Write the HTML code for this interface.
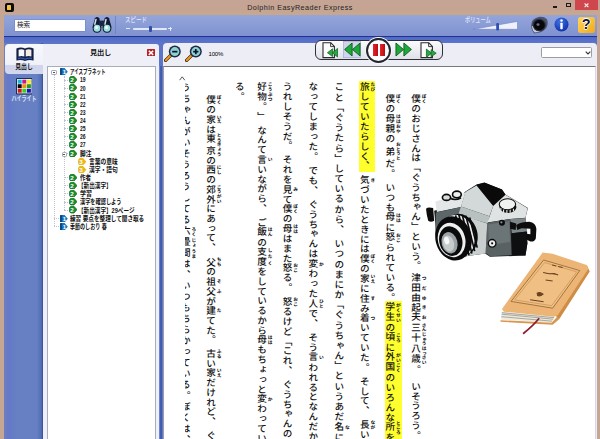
<!DOCTYPE html>
<html lang="ja"><head><meta charset="utf-8"><title>Dolphin EasyReader Express</title>
<style>
html,body{margin:0;padding:0}
body{width:600px;height:439px;overflow:hidden;position:relative;background:#c5a594;font-family:"Liberation Sans","IPAGothic",sans-serif;color:#111}
.a{position:absolute}
.ui{font-family:"Liberation Sans","Noto Sans CJK JP","IPAPGothic",sans-serif}
.col{position:absolute;top:93.5px;writing-mode:vertical-rl;white-space:nowrap;font-family:"Noto Sans CJK JP","IPAGothic",sans-serif;font-size:9.6px;line-height:22px;width:22px;letter-spacing:.12px;color:#101010;font-weight:500;text-spacing-trim:space-all;text-rendering:geometricPrecision}
.col rt{font-size:4.7px;letter-spacing:0;color:#000;line-height:5px;font-weight:700}
.hs{display:inline-block;height:4px;width:1px}
.row{position:absolute;left:0;height:8px;white-space:nowrap;font-size:7px;line-height:8px;font-weight:bold;color:#111}
.row span{display:inline-block;transform-origin:0 50%}
</style></head>
<body>
<div class="a" style="left:0;top:0;width:600px;height:15px;background:linear-gradient(#c5a495,#c5a494 60%,#c8a88c)"></div>
<div class="a" style="left:4.5px;top:3px;width:9px;height:8.5px;background:#0c0c10;border-radius:2px"></div>
<div class="a" style="left:7px;top:4.5px;width:4px;height:5.5px;background:#f3c53c;border-radius:.5px"></div>
<div class="a ui" style="left:200px;top:2.6px;width:200px;text-align:center;font-size:7.2px;line-height:9px;letter-spacing:.45px;color:#231f1c">Dolphin EasyReader Express</div>
<div class="a" style="left:552.5px;top:6px;width:4px;height:1.6px;background:#1a1a1a"></div>
<div class="a" style="left:565.6px;top:2.7px;width:3.6px;height:2.2px;border:.9px solid #1a1a1a;border-top-width:1.5px"></div>
<div class="a" style="left:575px;top:0;width:23px;height:9.7px;background:#cf474c"></div>
<svg class="a" style="left:584.2px;top:3.4px" width="5" height="4.6" viewBox="0 0 5 4.6"><path d="M.6 .5L4.4 4.1M4.4 .5L.6 4.1" stroke="#fbeeee" stroke-width="1.1"/></svg>
<div class="a" style="left:4px;top:14.5px;width:593px;height:425px;background:#5d75c6"></div>
<div class="a" style="left:4px;top:14.5px;width:593px;height:21.5px;background:linear-gradient(#95a5da,#8a9cd5 50%,#7f92d0)"></div>
<div class="a" style="left:4px;top:35.5px;width:593px;height:1.7px;background:#1f3390"></div>
<div class="a" style="left:4px;top:37.2px;width:593px;height:6px;background:linear-gradient(#4f69c4,#5d75cb)"></div>
<div class="a" style="left:14.5px;top:20px;width:70px;height:10.5px;background:#fff;box-shadow:0 0 0 .6px #7385c8"></div>
<div class="a ui" style="left:17px;top:21.3px;font-size:6.6px;line-height:8px;color:#222">検索</div>
<svg class="a" style="left:92px;top:16.2px" width="20" height="17.4" viewBox="0 0 20 17.4">
<path d="M3 2.2Q5 -.2 7.2 2.2L9.4 10.6Q9.8 16.8 5 16.8Q.2 16.8 .6 10.6Z" fill="#111a30"/>
<path d="M12.8 2.2Q15 -.2 17 2.2L19.4 10.6Q19.8 16.8 15 16.8Q10.2 16.8 10.6 10.6Z" fill="#111a30"/>
<rect x="7" y="4.6" width="6" height="5.4" fill="#1a2644"/>
<ellipse cx="5" cy="12.2" rx="3.3" ry="3.5" fill="#9fe0dc"/><ellipse cx="15" cy="12.2" rx="3.3" ry="3.5" fill="#9fe0dc"/>
<ellipse cx="4.6" cy="11.4" rx="1.6" ry="1.5" fill="#e4fbf8"/><ellipse cx="14.6" cy="11.4" rx="1.6" ry="1.5" fill="#e4fbf8"/>
<path d="M4 3.4L2.8 8.2M14 3.4L13 8.2" stroke="#d4def0" stroke-width="1.5" stroke-linecap="round"/>
</svg>
<div class="a" style="left:115.3px;top:16px;width:1px;height:18px;background:rgba(112,128,190,.85)"></div>
<div class="a ui" style="left:124.5px;top:15.6px;font-size:7px;line-height:8px;color:#e2e7f8;font-weight:500;transform:scaleX(.78);transform-origin:0 0;white-space:nowrap">スピード</div>
<div class="a" style="left:126px;top:28.4px;width:3.6px;height:1px;background:#e4e9f8"></div>
<div class="a" style="left:133px;top:27.9px;width:34px;height:1.8px;border-radius:1px;background:#e2e7f7"></div>
<div class="a" style="left:149.1px;top:26.1px;width:2.7px;height:5.6px;background:#3350a8;border-radius:1px"></div>
<div class="a" style="left:168.3px;top:28.4px;width:3.6px;height:1px;background:#e4e9f8"></div><div class="a" style="left:169.6px;top:27.1px;width:1px;height:3.6px;background:#e4e9f8"></div>
<div class="a ui" style="left:464.5px;top:15.6px;font-size:7px;line-height:8px;color:#e2e7f8;font-weight:500;transform:scaleX(.74);transform-origin:0 0;white-space:nowrap">ボリューム</div>
<svg class="a" style="left:470px;top:18.8px" width="50" height="13" viewBox="0 0 50 13"><path d="M3 10.3L47.5 2.4V10.3Z" fill="#eef1fb" stroke="#6c7fc4" stroke-width=".6"/><rect x="26.2" y="4" width="2.8" height="7.6" rx="1" fill="#2d4fb4"/></svg>
<svg class="a" style="left:530px;top:15.8px" width="18.5" height="18" viewBox="0 0 18.5 18">
<path d="M1.2 9.4Q1 2.6 8.6 .9Q14 .2 17 3.2Q18.4 6 17.4 9.6Q15.8 14.4 10.6 16.2L4.4 17.4Q1.4 15 1.2 9.4Z" fill="#4d556e"/>
<path d="M2 10Q2.4 15 5 16.6L10.4 15.6Q6 15 3.4 10Z" fill="#c9cede"/>
<ellipse cx="9.2" cy="9" rx="6.6" ry="6.3" fill="#2a2e3e"/>
<ellipse cx="9.3" cy="9.2" rx="5.4" ry="5.1" fill="#07070a"/>
<ellipse cx="8" cy="8.6" rx="1.5" ry="1.3" fill="#6a7088"/>
</svg>
<svg class="a" style="left:553.5px;top:17px" width="15" height="15" viewBox="0 0 15 15">
<defs><radialGradient id="gi" cx=".4" cy=".3" r=".8"><stop offset="0" stop-color="#3f74e6"/><stop offset="1" stop-color="#0a2aa0"/></radialGradient></defs>
<circle cx="7.5" cy="7.5" r="7" fill="url(#gi)"/>
<circle cx="7.5" cy="3.6" r="1.25" fill="#fff"/><rect x="6.3" y="5.8" width="2.4" height="6.4" rx=".6" fill="#fff"/>
</svg>
<div class="a" style="left:578px;top:17px;width:16.5px;height:15.5px;border-radius:2.5px;background:linear-gradient(135deg,#ffd65a,#f3a81a)"></div>
<div class="a" style="left:578px;top:16.4px;width:16.5px;text-align:center;font-size:14.5px;line-height:16px;font-weight:bold;color:#15152c;text-shadow:0 0 1.2px #fff,.7px 0 0 #fff,-.7px 0 0 #fff,0 .7px 0 #fff,0 -.7px 0 #fff">?</div>
<div class="a" style="left:3.6px;top:43px;width:39.4px;height:396px;background:linear-gradient(90deg,#6f80b8 0,#6578c8 10%,#6680c3 32%,#6680c3 84%,#4f6cb2 96%,#34498f 100%)"></div>
<div class="a" style="left:5px;top:44px;width:40px;height:30.3px;border-radius:4px 0 0 4px;background:linear-gradient(#f7f8fc 0,#f1f2f9 68%,#cfd4ec 72%,#d4d8ee 100%)"></div>
<svg class="a" style="left:15.5px;top:47px" width="18" height="14.5" viewBox="0 0 18 14.5">
<path d="M.4 1.6Q5 -.4 9 1.6Q13 -.4 17.6 1.6V13.6Q13 12.4 9 14Q5 12.4 .4 13.6Z" fill="#141f45"/>
<path d="M2.6 2.8Q5.6 1.6 8.3 3V9.6Q5.6 8.6 2.6 9.6Z" fill="#f6f6fa"/>
<path d="M15.4 2.8Q12.4 1.6 9.7 3V9.6Q12.4 8.6 15.4 9.6Z" fill="#f4ebe4"/>
<path d="M2 10.8Q5.6 9.8 9 11.4Q12.4 9.8 16 10.8V12.2Q12.4 11.2 9 12.8Q5.6 11.2 2 12.2Z" fill="#2f5cb6"/>
</svg>
<div class="a ui" style="left:5px;top:63.3px;width:38px;text-align:center;font-size:7px;line-height:8px;font-weight:bold;color:#111;transform:scaleX(.84);white-space:nowrap">見出し</div>
<svg class="a" style="left:15.6px;top:78.2px" width="16.6" height="16.4" viewBox="0 0 16.6 16.4"><rect x="0" y="0" width="16.6" height="16.4" rx="1" fill="#1c2a5c"/><rect x="1" y="1" width="14.6" height="14.4" fill="#f4f6fc"/><rect x="1.7" y="1.7" width="4" height="3.9" fill="#18b6d8"/><rect x="6.3" y="1.7" width="4" height="3.9" fill="#c8188c"/><rect x="10.9" y="1.7" width="4" height="3.9" fill="#f8e818"/><rect x="1.7" y="6.2" width="4" height="3.9" fill="#0a0a0a"/><rect x="6.3" y="6.2" width="4" height="3.9" fill="#f09018"/><rect x="10.9" y="6.2" width="4" height="3.9" fill="#2a9a1e"/><rect x="1.7" y="10.8" width="4" height="3.9" fill="#cc1a14"/><rect x="6.3" y="10.8" width="4" height="3.9" fill="#3cd020"/><rect x="10.9" y="10.8" width="4" height="3.9" fill="#1018b8"/></svg>
<div class="a ui" style="left:5px;top:95.3px;width:38px;text-align:center;font-size:7px;line-height:8px;font-weight:bold;color:#dde3f7;transform:scaleX(.72);white-space:nowrap">ハイライト</div>
<div class="a" style="left:43px;top:43.5px;width:116px;height:396px;background:#eff0f7;border-radius:0 3px 0 0"></div>
<div class="a ui" style="left:42px;top:48px;width:117px;text-align:center;font-size:7.3px;line-height:9px;font-weight:bold;color:#111;letter-spacing:-.3px">見出し</div>
<div class="a" style="left:147px;top:48.5px;width:8px;height:7.6px;background:#b92025;border-radius:.5px"></div>
<svg class="a" style="left:147px;top:48.5px" width="8" height="7.6" viewBox="0 0 8 7.6"><path d="M1.8 1.7L6.2 5.9M6.2 1.7L1.8 5.9" stroke="#fff" stroke-width="1.5"/></svg>
<div class="a" style="left:47px;top:66px;width:106.5px;height:380px;background:#fff;border:1px solid #a9adba"></div>
<div class="a" style="left:54px;top:74.5px;width:0;height:151.5px;border-left:1px dotted #c2c2cc"></div>
<div class="a" style="left:64.2px;top:75.5px;width:0;height:134.2px;border-left:1px dotted #c2c2cc"></div>
<svg class="a" style="left:59.5px;top:67.8px" width="8" height="7.4" viewBox="0 0 8 7.4"><path d="M1 0H4.6L7.8 3.7L4.6 7.4H1Q0 7.4 0 6.4V1Q0 0 1 0Z" fill="#1b78c0"/><path d="M1 0H2.2V7.4H1Q0 7.4 0 6.4V1Q0 0 1 0Z" fill="#0d4a86"/><text x="2.7" y="6" font-size="6" font-weight="bold" fill="#fff" font-family="Liberation Sans,sans-serif">1</text></svg>
<div class="row ui" style="left:69.7px;top:67.9px"><span style="transform:scaleX(0.64)">アイスプラネット</span></div>
<svg class="a" style="left:68.6px;top:76.3px" width="8.4" height="7.4" viewBox="0 0 8.4 7.4"><path d="M2.4 .3H5L8.1 3.7L5 7.1H2.4Q.3 7.1 .3 3.7Q.3 .3 2.4 .3Z" fill="#1a8f2b" stroke="#0c5a18" stroke-width=".6"/><text x="1.3" y="6" font-size="6.2" font-weight="bold" fill="#fff" font-family="Liberation Sans,sans-serif">2</text></svg>
<div class="a" style="left:64.2px;top:79.5px;width:4px;height:0;border-top:1px dotted #c2c2cc"></div>
<div class="row ui" style="left:79.6px;top:76.4px"><span style="transform:scaleX(0.72)">19</span></div>
<svg class="a" style="left:68.6px;top:84.4px" width="8.4" height="7.4" viewBox="0 0 8.4 7.4"><path d="M2.4 .3H5L8.1 3.7L5 7.1H2.4Q.3 7.1 .3 3.7Q.3 .3 2.4 .3Z" fill="#1a8f2b" stroke="#0c5a18" stroke-width=".6"/><text x="1.3" y="6" font-size="6.2" font-weight="bold" fill="#fff" font-family="Liberation Sans,sans-serif">2</text></svg>
<div class="a" style="left:64.2px;top:87.6px;width:4px;height:0;border-top:1px dotted #c2c2cc"></div>
<div class="row ui" style="left:79.6px;top:84.5px"><span style="transform:scaleX(0.72)">20</span></div>
<svg class="a" style="left:68.6px;top:92.6px" width="8.4" height="7.4" viewBox="0 0 8.4 7.4"><path d="M2.4 .3H5L8.1 3.7L5 7.1H2.4Q.3 7.1 .3 3.7Q.3 .3 2.4 .3Z" fill="#1a8f2b" stroke="#0c5a18" stroke-width=".6"/><text x="1.3" y="6" font-size="6.2" font-weight="bold" fill="#fff" font-family="Liberation Sans,sans-serif">2</text></svg>
<div class="a" style="left:64.2px;top:95.8px;width:4px;height:0;border-top:1px dotted #c2c2cc"></div>
<div class="row ui" style="left:79.6px;top:92.7px"><span style="transform:scaleX(0.72)">21</span></div>
<svg class="a" style="left:68.6px;top:100.7px" width="8.4" height="7.4" viewBox="0 0 8.4 7.4"><path d="M2.4 .3H5L8.1 3.7L5 7.1H2.4Q.3 7.1 .3 3.7Q.3 .3 2.4 .3Z" fill="#1a8f2b" stroke="#0c5a18" stroke-width=".6"/><text x="1.3" y="6" font-size="6.2" font-weight="bold" fill="#fff" font-family="Liberation Sans,sans-serif">2</text></svg>
<div class="a" style="left:64.2px;top:103.9px;width:4px;height:0;border-top:1px dotted #c2c2cc"></div>
<div class="row ui" style="left:79.6px;top:100.8px"><span style="transform:scaleX(0.72)">22</span></div>
<svg class="a" style="left:68.6px;top:108.8px" width="8.4" height="7.4" viewBox="0 0 8.4 7.4"><path d="M2.4 .3H5L8.1 3.7L5 7.1H2.4Q.3 7.1 .3 3.7Q.3 .3 2.4 .3Z" fill="#1a8f2b" stroke="#0c5a18" stroke-width=".6"/><text x="1.3" y="6" font-size="6.2" font-weight="bold" fill="#fff" font-family="Liberation Sans,sans-serif">2</text></svg>
<div class="a" style="left:64.2px;top:112.0px;width:4px;height:0;border-top:1px dotted #c2c2cc"></div>
<div class="row ui" style="left:79.6px;top:108.9px"><span style="transform:scaleX(0.72)">23</span></div>
<svg class="a" style="left:68.6px;top:117.0px" width="8.4" height="7.4" viewBox="0 0 8.4 7.4"><path d="M2.4 .3H5L8.1 3.7L5 7.1H2.4Q.3 7.1 .3 3.7Q.3 .3 2.4 .3Z" fill="#1a8f2b" stroke="#0c5a18" stroke-width=".6"/><text x="1.3" y="6" font-size="6.2" font-weight="bold" fill="#fff" font-family="Liberation Sans,sans-serif">2</text></svg>
<div class="a" style="left:64.2px;top:120.2px;width:4px;height:0;border-top:1px dotted #c2c2cc"></div>
<div class="row ui" style="left:79.6px;top:117.1px"><span style="transform:scaleX(0.72)">24</span></div>
<svg class="a" style="left:68.6px;top:125.1px" width="8.4" height="7.4" viewBox="0 0 8.4 7.4"><path d="M2.4 .3H5L8.1 3.7L5 7.1H2.4Q.3 7.1 .3 3.7Q.3 .3 2.4 .3Z" fill="#1a8f2b" stroke="#0c5a18" stroke-width=".6"/><text x="1.3" y="6" font-size="6.2" font-weight="bold" fill="#fff" font-family="Liberation Sans,sans-serif">2</text></svg>
<div class="a" style="left:64.2px;top:128.3px;width:4px;height:0;border-top:1px dotted #c2c2cc"></div>
<div class="row ui" style="left:79.6px;top:125.2px"><span style="transform:scaleX(0.72)">25</span></div>
<svg class="a" style="left:68.6px;top:133.2px" width="8.4" height="7.4" viewBox="0 0 8.4 7.4"><path d="M2.4 .3H5L8.1 3.7L5 7.1H2.4Q.3 7.1 .3 3.7Q.3 .3 2.4 .3Z" fill="#1a8f2b" stroke="#0c5a18" stroke-width=".6"/><text x="1.3" y="6" font-size="6.2" font-weight="bold" fill="#fff" font-family="Liberation Sans,sans-serif">2</text></svg>
<div class="a" style="left:64.2px;top:136.4px;width:4px;height:0;border-top:1px dotted #c2c2cc"></div>
<div class="row ui" style="left:79.6px;top:133.3px"><span style="transform:scaleX(0.72)">26</span></div>
<svg class="a" style="left:68.6px;top:141.3px" width="8.4" height="7.4" viewBox="0 0 8.4 7.4"><path d="M2.4 .3H5L8.1 3.7L5 7.1H2.4Q.3 7.1 .3 3.7Q.3 .3 2.4 .3Z" fill="#1a8f2b" stroke="#0c5a18" stroke-width=".6"/><text x="1.3" y="6" font-size="6.2" font-weight="bold" fill="#fff" font-family="Liberation Sans,sans-serif">2</text></svg>
<div class="a" style="left:64.2px;top:144.5px;width:4px;height:0;border-top:1px dotted #c2c2cc"></div>
<div class="row ui" style="left:79.6px;top:141.4px"><span style="transform:scaleX(0.72)">27</span></div>
<svg class="a" style="left:68.6px;top:149.5px" width="8.4" height="7.4" viewBox="0 0 8.4 7.4"><path d="M2.4 .3H5L8.1 3.7L5 7.1H2.4Q.3 7.1 .3 3.7Q.3 .3 2.4 .3Z" fill="#1a8f2b" stroke="#0c5a18" stroke-width=".6"/><text x="1.3" y="6" font-size="6.2" font-weight="bold" fill="#fff" font-family="Liberation Sans,sans-serif">2</text></svg>
<div class="a" style="left:64.2px;top:152.7px;width:4px;height:0;border-top:1px dotted #c2c2cc"></div>
<div class="row ui" style="left:79.6px;top:149.6px"><span style="transform:scaleX(0.81)">脚注</span></div>
<svg class="a" style="left:78.4px;top:157.6px" width="8.4" height="7.4" viewBox="0 0 8.4 7.4"><path d="M2.4 0H5L8.4 3.7L5 7.4H2.4Q0 7.4 0 3.7Q0 0 2.4 0Z" fill="#e8b81c"/><text x="1.3" y="6" font-size="6.2" font-weight="bold" fill="#fff" font-family="Liberation Sans,sans-serif">3</text></svg>
<div class="row ui" style="left:89.0px;top:157.7px"><span style="transform:scaleX(0.82)">言葉の意味</span></div>
<svg class="a" style="left:78.4px;top:165.7px" width="8.4" height="7.4" viewBox="0 0 8.4 7.4"><path d="M2.4 0H5L8.4 3.7L5 7.4H2.4Q0 7.4 0 3.7Q0 0 2.4 0Z" fill="#e8b81c"/><text x="1.3" y="6" font-size="6.2" font-weight="bold" fill="#fff" font-family="Liberation Sans,sans-serif">3</text></svg>
<div class="row ui" style="left:89.0px;top:165.8px"><span style="transform:scaleX(0.82)">漢字・語句</span></div>
<svg class="a" style="left:68.6px;top:173.9px" width="8.4" height="7.4" viewBox="0 0 8.4 7.4"><path d="M2.4 .3H5L8.1 3.7L5 7.1H2.4Q.3 7.1 .3 3.7Q.3 .3 2.4 .3Z" fill="#1a8f2b" stroke="#0c5a18" stroke-width=".6"/><text x="1.3" y="6" font-size="6.2" font-weight="bold" fill="#fff" font-family="Liberation Sans,sans-serif">2</text></svg>
<div class="a" style="left:64.2px;top:177.1px;width:4px;height:0;border-top:1px dotted #c2c2cc"></div>
<div class="row ui" style="left:79.6px;top:174.0px"><span style="transform:scaleX(0.79)">作者</span></div>
<svg class="a" style="left:68.6px;top:182.0px" width="8.4" height="7.4" viewBox="0 0 8.4 7.4"><path d="M2.4 .3H5L8.1 3.7L5 7.1H2.4Q.3 7.1 .3 3.7Q.3 .3 2.4 .3Z" fill="#1a8f2b" stroke="#0c5a18" stroke-width=".6"/><text x="1.3" y="6" font-size="6.2" font-weight="bold" fill="#fff" font-family="Liberation Sans,sans-serif">2</text></svg>
<div class="a" style="left:64.2px;top:185.2px;width:4px;height:0;border-top:1px dotted #c2c2cc"></div>
<div class="row ui" style="left:77.8px;top:182.1px"><span style="transform:scaleX(0.80)">【新出漢字】</span></div>
<svg class="a" style="left:68.6px;top:190.1px" width="8.4" height="7.4" viewBox="0 0 8.4 7.4"><path d="M2.4 .3H5L8.1 3.7L5 7.1H2.4Q.3 7.1 .3 3.7Q.3 .3 2.4 .3Z" fill="#1a8f2b" stroke="#0c5a18" stroke-width=".6"/><text x="1.3" y="6" font-size="6.2" font-weight="bold" fill="#fff" font-family="Liberation Sans,sans-serif">2</text></svg>
<div class="a" style="left:64.2px;top:193.3px;width:4px;height:0;border-top:1px dotted #c2c2cc"></div>
<div class="row ui" style="left:79.6px;top:190.2px"><span style="transform:scaleX(0.85)">学習</span></div>
<svg class="a" style="left:68.6px;top:198.3px" width="8.4" height="7.4" viewBox="0 0 8.4 7.4"><path d="M2.4 .3H5L8.1 3.7L5 7.1H2.4Q.3 7.1 .3 3.7Q.3 .3 2.4 .3Z" fill="#1a8f2b" stroke="#0c5a18" stroke-width=".6"/><text x="1.3" y="6" font-size="6.2" font-weight="bold" fill="#fff" font-family="Liberation Sans,sans-serif">2</text></svg>
<div class="a" style="left:64.2px;top:201.5px;width:4px;height:0;border-top:1px dotted #c2c2cc"></div>
<div class="row ui" style="left:79.6px;top:198.4px"><span style="transform:scaleX(0.74)">漢字を確認しよう</span></div>
<svg class="a" style="left:68.6px;top:206.4px" width="8.4" height="7.4" viewBox="0 0 8.4 7.4"><path d="M2.4 .3H5L8.1 3.7L5 7.1H2.4Q.3 7.1 .3 3.7Q.3 .3 2.4 .3Z" fill="#1a8f2b" stroke="#0c5a18" stroke-width=".6"/><text x="1.3" y="6" font-size="6.2" font-weight="bold" fill="#fff" font-family="Liberation Sans,sans-serif">2</text></svg>
<div class="a" style="left:64.2px;top:209.6px;width:4px;height:0;border-top:1px dotted #c2c2cc"></div>
<div class="row ui" style="left:77.8px;top:206.5px"><span style="transform:scaleX(0.80)">【新出漢字】29ページ</span></div>
<svg class="a" style="left:59.5px;top:214.5px" width="8" height="7.4" viewBox="0 0 8 7.4"><path d="M1 0H4.6L7.8 3.7L4.6 7.4H1Q0 7.4 0 6.4V1Q0 0 1 0Z" fill="#1b78c0"/><path d="M1 0H2.2V7.4H1Q0 7.4 0 6.4V1Q0 0 1 0Z" fill="#0d4a86"/><text x="2.7" y="6" font-size="6" font-weight="bold" fill="#fff" font-family="Liberation Sans,sans-serif">1</text></svg>
<div class="a" style="left:54px;top:217.7px;width:5px;height:0;border-top:1px dotted #c2c2cc"></div>
<div class="row ui" style="left:69.7px;top:214.6px"><span style="transform:scaleX(0.80)">練習 要点を整理して聞き取る</span></div>
<svg class="a" style="left:59.5px;top:222.6px" width="8" height="7.4" viewBox="0 0 8 7.4"><path d="M1 0H4.6L7.8 3.7L4.6 7.4H1Q0 7.4 0 6.4V1Q0 0 1 0Z" fill="#1b78c0"/><path d="M1 0H2.2V7.4H1Q0 7.4 0 6.4V1Q0 0 1 0Z" fill="#0d4a86"/><text x="2.7" y="6" font-size="6" font-weight="bold" fill="#fff" font-family="Liberation Sans,sans-serif">1</text></svg>
<div class="a" style="left:54px;top:225.8px;width:5px;height:0;border-top:1px dotted #c2c2cc"></div>
<div class="row ui" style="left:69.7px;top:222.7px"><span style="transform:scaleX(0.72)">季節のしおり 春</span></div>
<div class="a" style="left:51.4px;top:69.8px;width:3.6px;height:3.6px;border:.7px solid #a4a8ba;background:#fff;border-radius:1.2px"></div><div class="a" style="left:52.8px;top:72.0px;width:2.2px;height:.8px;background:#555"></div>
<div class="a" style="left:61.7px;top:151.5px;width:3.6px;height:3.6px;border:.7px solid #a4a8ba;background:#fff;border-radius:1.2px"></div><div class="a" style="left:63.1px;top:153.7px;width:2.2px;height:.8px;background:#555"></div>
<div class="a" style="left:162.6px;top:43.3px;width:434px;height:396px;background:#edeef5;border-radius:4px 4px 0 0"></div>
<div class="a" style="left:159px;top:66px;width:3.6px;height:373px;background:linear-gradient(90deg,#8296d6,#3e5cb4 40%,#3e5cb4 70%,#7f90cc)"></div>
<svg class="a" style="left:164.0px;top:44.5px" width="18" height="17" viewBox="0 0 18 17"><path d="M6.4 10.6L1.6 15.4" stroke="#3a2408" stroke-width="3.4" stroke-linecap="round"/><path d="M6.2 10.8L1.8 15.2" stroke="#f09a1e" stroke-width="2" stroke-linecap="round"/><circle cx="10.8" cy="6.6" r="6" fill="#1c2c48"/><circle cx="10.8" cy="6.6" r="4.5" fill="#8fd0d4"/><rect x="8.2" y="5.8" width="5.2" height="1.7" fill="#0c1428"/></svg>
<svg class="a" style="left:185.0px;top:44.5px" width="18" height="17" viewBox="0 0 18 17"><path d="M6.4 10.6L1.6 15.4" stroke="#3a2408" stroke-width="3.4" stroke-linecap="round"/><path d="M6.2 10.8L1.8 15.2" stroke="#f09a1e" stroke-width="2" stroke-linecap="round"/><circle cx="10.8" cy="6.6" r="6" fill="#1c2c48"/><circle cx="10.8" cy="6.6" r="4.5" fill="#8fd0d4"/><rect x="8.2" y="5.8" width="5.2" height="1.7" fill="#0c1428"/><rect x="9.95" y="4" width="1.7" height="5.2" fill="#0c1428"/></svg>
<div class="a ui" style="left:208.5px;top:50.6px;font-size:6px;line-height:7px;color:#000;letter-spacing:-.15px">100%</div>
<div class="a" style="left:314.6px;top:40.2px;width:128px;height:19.4px;border:1.3px solid #2e3036;border-radius:6px;background:linear-gradient(#fbfbfd,#dfe1e8);box-sizing:border-box"></div>
<div class="a" style="left:343.2px;top:41.2px;width:18.2px;height:17px;background:#cfd6ec;box-shadow:inset 0 0 0 .8px #a9b5da"></div>
<div class="a" style="left:366.2px;top:37.6px;width:25px;height:25px;border-radius:50%;border:2px solid #24262c;background:radial-gradient(#fff 60%,#e4e6ee);box-shadow:0 0 0 1px #f4f5fa;box-sizing:border-box"></div>
<div class="a" style="left:372.8px;top:43.6px;width:4.8px;height:12.2px;background:linear-gradient(90deg,#e8242a,#b80c12)"></div><div class="a" style="left:380.2px;top:43.6px;width:4.8px;height:12.2px;background:linear-gradient(90deg,#e8242a,#b80c12)"></div>
<svg class="a" style="left:343.8px;top:41.6px" width="17" height="15" viewBox="0 0 18 15" preserveAspectRatio="none"><path d="M8.6 1V14L.6 7.5ZM17 1V14L9 7.5Z" fill="#1fa83a" stroke="#0d5a1c" stroke-width=".9" stroke-linejoin="round"/></svg>
<svg class="a" style="left:395.3px;top:41.6px" width="17" height="15" viewBox="0 0 18 15" preserveAspectRatio="none"><path d="M1 1V14L9 7.5ZM9.4 1V14L17.4 7.5Z" fill="#1fa83a" stroke="#0d5a1c" stroke-width=".9" stroke-linejoin="round"/></svg>
<svg class="a" style="left:322px;top:41.5px" width="16" height="17" viewBox="0 0 16 17">
<path d="M1 .8H8.8L12.4 4.4V15.6H1Z" fill="#fbfbfb" stroke="#2a2a2e" stroke-width="1.1"/><path d="M8.6 .8V4.6H12.4" fill="none" stroke="#2a2a2e" stroke-width=".9"/>
<path d="M15.6 6.4V15L10.4 10.7Z" fill="#27a844" stroke="#0d5a1c" stroke-width=".7"/><path d="M10.6 6.8V14.6L5.4 10.7Z" fill="#27a844" stroke="#0d5a1c" stroke-width=".7"/>
</svg>
<svg class="a" style="left:420px;top:41.5px" width="17" height="17" viewBox="0 0 17 17">
<path d="M1 .8H8.8L12.4 4.4V15.6H1Z" fill="#fbfbfb" stroke="#2a2a2e" stroke-width="1.1"/><path d="M8.6 .8V4.6H12.4" fill="none" stroke="#2a2a2e" stroke-width=".9"/>
<path d="M6.4 7V15.4L11.6 11.2Z" fill="#27a844" stroke="#0d5a1c" stroke-width=".7"/><path d="M11 7.6V14.8L16.2 11.2Z" fill="#27a844" stroke="#0d5a1c" stroke-width=".7"/>
</svg>
<div class="a" style="left:541px;top:47px;width:51px;height:10.6px;background:#fff;border:.8px solid #9a9ca6;border-radius:1.5px;box-sizing:border-box"></div>
<svg class="a" style="left:584.5px;top:50.5px" width="6" height="4" viewBox="0 0 6 4"><path d="M.7 .7L3 3L5.3 .7" fill="none" stroke="#333" stroke-width="1.1"/></svg>
<div class="a" style="left:163.4px;top:65.6px;width:432.4px;height:380px;background:#fff;border-top:1px solid #76787e;border-left:1px solid #9a9ca6;border-right:1px solid #d4d8ea;box-sizing:border-box"></div>
<div class="a" style="left:358.9px;top:81.3px;width:16.5px;height:91.2px;background:#ffff2e"></div>
<div class="a" style="left:384.6px;top:300.5px;width:17px;height:140px;background:#ffff2e"></div>
<div class="col" style="left:405.00px;top:93.8px;letter-spacing:0.22px"><ruby>僕<rt>ぼく</rt></ruby>のおじさんは「ぐうちゃん」という。<i class="hs" style="height:2.5px"></i><ruby>津<rt>つ</rt></ruby><ruby>田<rt>だ</rt></ruby><ruby>由<rt>ゆ</rt></ruby><ruby>起<rt>き</rt></ruby><ruby>夫<rt>お</rt></ruby><ruby>三十八歳<rt>さんじゅうはっさい</rt></ruby>。<i class="hs" style="height:7.3px"></i>いそうろう。</div>
<div class="col" style="left:379.30px;top:93.6px;letter-spacing:0.39px"><ruby>僕<rt>ぼく</rt></ruby>の<ruby>母親<rt>ははおや</rt></ruby>の<ruby>弟<rt>おとうと</rt></ruby>だ。<i class="hs"></i>いつも<ruby>母<rt>はは</rt></ruby>に<ruby>怒<rt>おこ</rt></ruby>られている。<ruby>学生<rt>がくせい</rt></ruby>の<ruby>頃<rt>ころ</rt></ruby>に<ruby>外国<rt>がいこく</rt></ruby>のいろんな<ruby>所<rt>ところ</rt></ruby>を</div>
<div class="col" style="left:353.80px;top:82.2px;letter-spacing:0.27px"><ruby>旅<rt>たび</rt></ruby>していたらしく、<i class="hs"></i><ruby>気<rt>き</rt></ruby>づいたときには<ruby>僕<rt>ぼく</rt></ruby>の<ruby>家<rt>いえ</rt></ruby>に<ruby>住<rt>す</rt></ruby>み<ruby>着<rt>つ</rt></ruby>いていた。<i class="hs"></i>そして、<i class="hs"></i><ruby>長<rt>なが</rt></ruby>い</div>
<div class="col" style="left:328.30px;top:82.3px;letter-spacing:0.58px">こと「ぐうたら」しているから、<i class="hs"></i>いつのまにか「ぐうちゃん」というあだ<ruby>名<rt>な</rt></ruby>に</div>
<div class="col" style="left:302.30px;top:82.2px;letter-spacing:0.33px">なってしまった。<i class="hs"></i>でも、<i class="hs"></i>ぐうちゃんは<ruby>変<rt>か</rt></ruby>わった<ruby>人<rt>ひと</rt></ruby>で、<i class="hs"></i>そう<ruby>言<rt>い</rt></ruby>われるとなんだか</div>
<div class="col" style="left:276.50px;top:82.3px;letter-spacing:0.24px">うれしそうだ。<i class="hs"></i>それを<ruby>見<rt>み</rt></ruby>て<ruby>僕<rt>ぼく</rt></ruby>の<ruby>母<rt>はは</rt></ruby>はまた<ruby>怒<rt>おこ</rt></ruby>る。<i class="hs"></i><ruby>怒<rt>おこ</rt></ruby>るけど「これ、<i class="hs"></i>ぐうちゃんの</div>
<div class="col" style="left:251.00px;top:82.2px;letter-spacing:0.20px"><ruby>好物<rt>こうぶつ</rt></ruby>。」<i class="hs"></i>なんて<ruby>言<rt>い</rt></ruby>いながら、<i class="hs"></i>ご<ruby>飯<rt>はん</rt></ruby>の<ruby>支度<rt>したく</rt></ruby>をしているから<ruby>母<rt>はは</rt></ruby>もちょっと<ruby>変<rt>か</rt></ruby>わってい</div>
<div class="col" style="left:228.70px;top:82.3px;letter-spacing:0.20px">る。</div>
<div class="col" style="left:200.00px;top:95.4px;letter-spacing:0.10px"><ruby>僕<rt>ぼく</rt></ruby>の<ruby>家<rt>いえ</rt></ruby>は<ruby>東京<rt>とうきょう</rt></ruby>の<ruby>西<rt>にし</rt></ruby>の<ruby>郊外<rt>こうがい</rt></ruby>にあって、<i class="hs" style="height:5px"></i><ruby>父<rt>ちち</rt></ruby>の<ruby>祖父<rt>そふ</rt></ruby>が<ruby>建<rt>た</rt></ruby>てた。<i class="hs"></i><ruby>古<rt>ふる</rt></ruby>い<ruby>家<rt>いえ</rt></ruby>だけれど、<i class="hs"></i>ぐ</div>
<div class="a" style="left:185px;top:66px;width:14px;height:380px;overflow:hidden"><div class="col" style="left:-10.2px;top:17px;letter-spacing:1.4px">うちゃんがいそうろうしてる<ruby>六畳間<rt>ろくじょうま</rt></ruby>は、いつもちらかっている。ぼくは、よくその</div></div>
<svg class="a" style="left:178.5px;top:75.5px" width="7" height="5" viewBox="0 0 7 5"><path d="M.6 4.2L3.2 .8L5.8 4.2" fill="none" stroke="#444" stroke-width=".9"/></svg>
<svg class="a" style="left:0;top:0" width="600" height="439" viewBox="0 0 600 439">
<!-- camera (coords = zoom px of region 420,160 @3.66) -->
<g transform="translate(420,160) scale(0.2732)">
 <!-- left strap lug -->
 <path d="M22 178Q30 170 48 176L52 222Q40 230 30 222Q24 200 22 178Z" fill="#0c0c0c"/>
 <!-- body base silhouette -->
 <path d="M52 186L132 163L165 116L207 90L236 82L300 108L313 126L395 176L386 212L393 306L386 350L256 354L238 342L120 360L62 300Z" fill="#15181a"/>
 <!-- top plate left -->
 <path d="M56 152L166 120L150 172L62 190Z" fill="#e4e7e7"/>
 <!-- front body left -->
 <path d="M58 192L150 172L160 200L90 250L66 290L56 270Z" fill="#5d6668"/>
 <!-- prism front -->
 <path d="M166 117L207 93L268 168L254 206L150 170Z" fill="#d3d8d8"/>
 <path d="M150 170L254 206L248 232L140 200Z" fill="#b9c0c0"/>
 <!-- prism top black -->
 <path d="M207 91L236 83L300 108L312 126L268 167Z" fill="#0a0a0a"/>
 <!-- top plate right -->
 <path d="M268 168L313 127L394 177L386 211L330 216L246 229L255 206Z" fill="#dfe3e3"/>
 <!-- right front face -->
 <path d="M246 230L330 216L336 348L256 352L240 340Z" fill="#596163"/>
 <path d="M250 236L326 224L330 300L252 312Z" fill="#6b7476"/>
 <!-- right side face -->
 <path d="M330 216L386 212L392 262L336 268Z" fill="#7d8688"/>
 <path d="M336 268L392 262L393 306L386 350L336 348Z" fill="#0d0f10"/>
 <!-- body lower left front (under lens) -->
 <path d="M150 200L246 232L240 342L170 352Z" fill="#c9cfcf"/>
 <!-- shutter dial -->
 <ellipse cx="322" cy="172" rx="31" ry="22" fill="#101010"/>
 <ellipse cx="320" cy="162" rx="30" ry="20" fill="#f0f2f2" stroke="#101010" stroke-width="4"/>
 <path d="M296 176V186M306 181V192M318 183V194M330 182V193M342 178V188" stroke="#e8eaea" stroke-width="4"/>
 <!-- rewind knob -->
 <ellipse cx="97" cy="137" rx="15" ry="11" fill="#d8dcdc" stroke="#0c0c0c" stroke-width="6"/>
 <ellipse cx="135" cy="126" rx="16" ry="12" fill="#eef0f0" stroke="#0c0c0c" stroke-width="6"/>
 <path d="M110 140Q130 150 150 138" stroke="#0c0c0c" stroke-width="6" fill="none"/>
 <!-- small parts -->
 <circle cx="300" cy="230" r="11" fill="#0c0c0c"/><circle cx="298" cy="228" r="4" fill="#8a9294"/>
 <circle cx="264" cy="305" r="14" fill="#e8ecec" stroke="#0c0c0c" stroke-width="5"/><circle cx="264" cy="305" r="4" fill="#0c0c0c"/>
 <!-- right strap lug -->
 <path d="M352 238Q372 226 400 226Q424 230 426 252L424 286Q420 300 404 298L388 290L390 270L404 272L404 252L372 250L356 256Z" fill="#0c0c0c"/>
 <path d="M330 226L352 232L350 256L330 252Z" fill="#0c0c0c"/>
 <!-- lens -->
 <g transform="rotate(-14 126 284)">
  <ellipse cx="150" cy="280" rx="62" ry="78" fill="#0b0b0b"/>
  <ellipse cx="140" cy="282" rx="60" ry="79" fill="#e9ecec"/>
  <path d="M150 206V360M162 206V360M174 210V356M186 216V350M198 226V340" stroke="#0b0b0b" stroke-width="6"/>
  <ellipse cx="122" cy="286" rx="66" ry="82" fill="#0b0b0b"/>
  <ellipse cx="114" cy="290" rx="50" ry="64" fill="#eef0f0"/>
  <ellipse cx="110" cy="293" rx="42" ry="55" fill="#0b0b0b"/>
  <ellipse cx="104" cy="298" rx="29" ry="40" fill="#9aa3a5"/>
  <ellipse cx="100" cy="300" rx="20" ry="30" fill="#c6cccc"/>
  <ellipse cx="96" cy="288" rx="9" ry="14" fill="#f6f8f8"/>
 </g>
</g>
<!-- book (coords = zoom px of region 490,240 @3.99) -->
<g transform="translate(490,240) scale(0.2506)">
 <path d="M44 318L48 286L258 306L246 330Z" fill="#efeadb"/>
 <path d="M46 296L252 316M45 306L248 324M47 290L256 310" stroke="#8d8f8a" stroke-width="3" fill="none"/>
 <path d="M42 320L246 330L268 306L276 316L250 338L42 326Z" fill="#d9964e"/>
 <path d="M386 100L398 126L276 316L262 302Z" fill="#cf8c45"/>
 <path d="M210 50L250 55L386 100L392 116L270 300L255 306L55 286L48 275Z" fill="#ecb576"/>
 <path d="M214 80L358 122L250 272L84 245Z" fill="#f0bf84" stroke="#9a6a34" stroke-width="3.5"/>
 <path d="M218 90L346 127L246 262L98 239Z" fill="none" stroke="#b27c40" stroke-width="2"/>
 <path d="M248 100L264 104M272 106L290 110M212 130L236 135L256 134L272 140M222 160L250 164M188 212Q200 206 212 216Q200 226 190 222ZM160 238L214 246" stroke="#6a4420" stroke-width="4" fill="#6a4420"/>
 <path d="M196 312Q176 338 132 374" stroke="#8c1f30" stroke-width="7" fill="none"/>
</g>
</svg>

</body></html>
